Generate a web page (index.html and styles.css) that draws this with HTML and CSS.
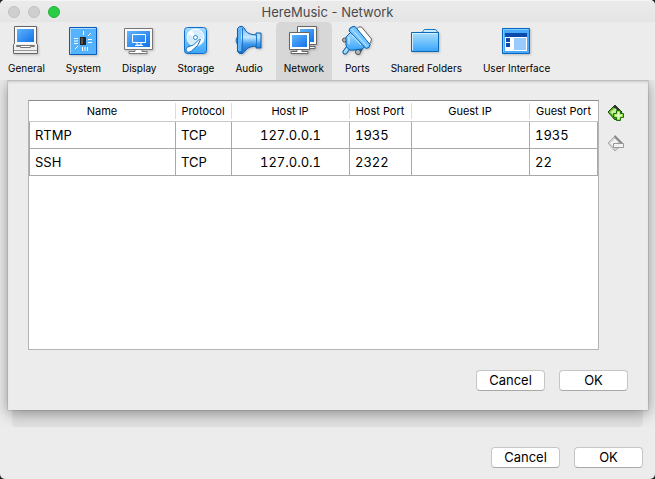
FILE: index.html
```html
<!DOCTYPE html>
<html lang="en">
<head>
  <meta charset="UTF-8" />
  <meta name="viewport" content="width=device-width, initial-scale=1.0" />
  <title>HereMusic - Network</title>
  <link rel="stylesheet" href="styles.css">
</head>
<body>

<div class="window">
  <svg class="defs" width="0" height="0" aria-hidden="true">
    <defs>
      <linearGradient id="screen" x1="0" y1="0" x2="1" y2="1">
        <stop offset="0" stop-color="#5fb4fb" />
        <stop offset="1" stop-color="#1272e8" />
      </linearGradient>
      <linearGradient id="sky" x1="0" y1="0" x2="0" y2="1">
        <stop offset="0" stop-color="#a9defe" />
        <stop offset="1" stop-color="#38a5fb" />
      </linearGradient>
      <linearGradient id="horn" x1="0" y1="0" x2="0" y2="1">
        <stop offset="0" stop-color="#5fb4f8" />
        <stop offset="0.4" stop-color="#c4e8ff" />
        <stop offset="0.65" stop-color="#3d98ea" />
        <stop offset="1" stop-color="#1767c4" />
      </linearGradient>
    </defs>
  </svg>

  <header class="titlebar">
    <div class="lights">
      <button class="light" aria-label="Close"></button>
      <button class="light" aria-label="Minimize"></button>
      <button class="light zoom" aria-label="Zoom"></button>
    </div>
    <h1>HereMusic - Network</h1>
  </header>

  <nav class="toolbar">
    <button class="tab">
      <svg viewBox="0 0 32 32">
        <path d="M4.500 1.500h22v18h-22z" fill="#fafafa" stroke="#666" />
        <path d="M7 4h17v13H7z" fill="url(#screen)" />
        <path d="M3.500 19.500h24v9h-24z" fill="#efefef" stroke="#666" />
        <path d="M4 25.500h23" stroke="#999" />
        <path d="M4 19.500h23" stroke="#efefef" />
        <path d="M6.500 20.500h18v1h-4v1h-10v-1h-4z" fill="#fff" stroke="#777" />
      </svg>
      <span>General</span>
    </button>
    <button class="tab">
      <svg viewBox="0 0 32 32">
        <path d="M2.500 2.500h27v27h-27z" fill="#55b2fc" stroke="#0a5cb8" />
        <path d="M3.500 28.500v-25h25" fill="none" stroke="#a9ddff" />
        <path d="M13 12h6v8h-6z" fill="#222" />
        <path d="M14 13h2v6h-2z" fill="#555" />
        <path d="M16.500 6v4M21 11l3-3M7 13.500h4M7 16h4M7 18.500h4M21 14.500h4M21 17.500h4M8 24l3-3M15.500 22v4M18 22v4M20.500 22v4" stroke="#fff" />
      </svg>
      <span>System</span>
    </button>
    <button class="tab">
      <svg viewBox="0 0 32 32">
        <path d="M1.500 3.500h28v21h-28z" fill="#f8f8f8" stroke="#777" />
        <path d="M4 6h23v16H4z" fill="url(#screen)" />
        <path d="M9.500 9.500h13v8h-13zM14 18v2h4v-2M12 20.500h8" fill="none" stroke="#fff" />
        <path d="M12 24.500h7v2h5v2H6v-2h6z" fill="#fff" stroke="#777" />
      </svg>
      <span>Display</span>
    </button>
    <button class="tab">
      <svg viewBox="0 0 32 32">
        <rect x="4.500" y="2.500" width="22" height="26" rx="3" fill="url(#sky)" stroke="#0d6fca" />
        <circle cx="15.500" cy="12.500" r="8.500" fill="#d3edfd" stroke="#fff" />
        <path d="M15.500 12.500L7 9a9 9 0 0 1 5-4zM15.500 12.500l8.500 2a9 9 0 0 1-3 5z" fill="#f8fdff" />
        <circle cx="15.500" cy="12.500" r="2" fill="#fff" stroke="#2a86d2" />
        <path d="M7.500 22l6-2 6-6 1 .5-3 6-6 5.500c-2 1.500-4 1.500-5 0s0-3 1-4z" fill="#fff" stroke="#1a6fbe" />
      </svg>
      <span>Storage</span>
    </button>
    <button class="tab">
      <svg viewBox="0 0 32 32">
        <path d="M5 11.500c-2.500 2-2.500 6 0 8" fill="#7cc6fb" stroke="#0d5da8" />
        <path d="M4.500 3.500l2-2h3c2 1 2 4 5 6 2 1.500 4 2 8.500 2.500v-2h5v15h-5v-2c-4.500.5-6.500 1-8.500 2.500-3 2-3 4-5 5h-3l-2-2z" fill="url(#horn)" stroke="#0d5da8" />
        <path d="M5 4h3v22H5z" fill="#62b5f8" />
        <path d="M9.500 3v24M23.500 10v11" stroke="#1c78ce" />
      </svg>
      <span>Audio</span>
    </button>
    <button class="tab active" aria-current="page">
      <svg viewBox="0 0 32 32">
        <path d="M9.500 1.500h19v18h-19zM21 21.500h6v2h-6z" fill="#f8f8f8" stroke="#666" />
        <path d="M12 4h14v13H12z" fill="url(#screen)" />
        <path d="M1.500 7.500h20v17h-20z" fill="#fff" stroke="#666" />
        <path d="M4 10h15v12H4z" fill="url(#screen)" />
        <path d="M9 24.500h5v2h6v2H3v-2h6z" fill="#fff" stroke="#666" />
      </svg>
      <span>Network</span>
    </button>
    <button class="tab">
      <svg viewBox="0 0 32 32">
        <path d="M15.500 4l2-2h3l10 12-1 4-3 1z" fill="#fff" stroke="#666" />
        <path d="M4 27l3-4M17 27l2-3" stroke="#0d5da8" stroke-width="5" stroke-linecap="round" />
        <path d="M4 27l3-4" stroke="#a3dcff" stroke-width="3" stroke-linecap="round" />
        <circle cx="3.500" cy="15" r="2" fill="#bbb" stroke="#555" />
        <circle cx="17" cy="27" r="2.500" fill="#bbb" stroke="#555" />
        <path d="M10 7l-5 5v8c1 4 4 6 8 5l8-1 5-4z" fill="url(#sky)" stroke="#0d5da8" />
        <path d="M9 3l3-1.500h2l15 18-1 3-3 1L8 6z" fill="#72c5fe" stroke="#0d5da8" />
        <path d="M10.500 4L26 21.500" stroke="#c5eaff" />
        <path d="M8 12v7M11 10l9 10" stroke="#d8f2ff" />
      </svg>
      <span>Ports</span>
    </button>
    <button class="tab">
      <svg viewBox="0 0 32 32">
        <path d="M11.500 8l3-3.500h11l3 3.500v3h-17z" fill="#c9ecff" stroke="#137bc8" />
        <path d="M1.500 7.500h27v19h-27z" fill="url(#sky)" stroke="#0d69b5" />
        <path d="M2.500 25.500v-17h25" fill="none" stroke="#d4f0ff" />
      </svg>
      <span>Shared Folders</span>
    </button>
    <button class="tab">
      <svg viewBox="0 0 32 32">
        <path d="M1.500 3.500h27v25h-27z" fill="#4aa9f8" stroke="#0867c6" />
        <path d="M2.500 27v-22.500h25" fill="none" stroke="#7fcbff" />
        <path d="M4 8h22v18H4z" fill="#fff" />
        <path d="M4 8h22v4H4zM5 13h4v4H5zM5 18h4v4H5z" fill="#0a4bad" />
        <path d="M13 13h12v12H13z" fill="#9acbfe" />
      </svg>
      <span>User Interface</span>
    </button>
  </nav>

  <main class="content">
    <section class="sheet">
      <div class="rules">
        <div class="list">
          <table>
            <colgroup>
              <col class="col-name">
              <col class="col-protocol">
              <col class="col-ip">
              <col class="col-port">
              <col class="col-ip">
              <col class="col-guest-port">
            </colgroup>
            <thead>
              <tr>
                <th><span>Name</span></th>
                <th><span>Protocol</span></th>
                <th><span>Host IP</span></th>
                <th><span>Host Port</span></th>
                <th><span>Guest IP</span></th>
                <th><span>Guest Port</span></th>
              </tr>
            </thead>
            <tbody>
              <tr>
                <td>RTMP</td>
                <td>TCP</td>
                <td class="ip">127.0.0.1</td>
                <td>1935</td>
                <td class="ip"></td>
                <td>1935</td>
              </tr>
              <tr>
                <td>SSH</td>
                <td>TCP</td>
                <td class="ip">127.0.0.1</td>
                <td>2322</td>
                <td class="ip"></td>
                <td>22</td>
              </tr>
            </tbody>
          </table>
        </div>
        <div class="tools">
          <button class="tool" aria-label="Add rule">
            <svg viewBox="0 0 18 18">
              <path d="M1 8l7-7 7 7-7 8z" fill="#58b520" stroke="#1d4f0c" />
              <path d="M8 1l6 6-2 1-6-5z" fill="#333" />
              <path d="M3 8l5-4 3 3-5 4z" fill="#c4ee9d" />
              <path d="M9.500 6.500h4v3h3v4h-3v3h-4v-3h-3v-4h3z" fill="#8fe03f" stroke="#1f6b0c" />
              <path d="M11.500 8v7M8 11.500h7" stroke="#e2fbc4" stroke-width="2" />
            </svg>
          </button>
          <button class="tool" aria-label="Remove rule" disabled>
            <svg viewBox="0 0 18 18">
              <path d="M1 9l7-7 8 8-8 7z" fill="#d2d2d2" stroke="#aaa" />
              <path d="M8 1l8 8-2 1-7-7z" fill="#888" />
              <path d="M3 9l5-4 3 3-5 4z" fill="#f4f4f4" />
              <path d="M6.500 9.500h10v4h-10z" fill="#f2f2f2" stroke="#999" />
            </svg>
          </button>
        </div>
      </div>
      <div class="actions">
        <button class="btn">Cancel</button>
        <button class="btn">OK</button>
      </div>
    </section>
    <div class="panel"></div>
  </main>

  <footer class="actions">
    <button class="btn">Cancel</button>
    <button class="btn">OK</button>
  </footer>
</div>

</body>
</html>
```
FILE: styles.css
```css
* {
  margin: 0;
  padding: 0;
  box-sizing: border-box;
}

body {
  background-color: #222;
  font-family: Inter, "Liberation Sans", sans-serif;
  color: #000;
}

button {
  border: none;
  background: none;
  font-family: inherit;
  color: inherit;
}

.defs {
  position: absolute;
}

.window {
  display: flex;
  flex-direction: column;
  min-height: 100vh;
  background-color: #ececec;
  border-radius: 5px;
  overflow: hidden;
}

.titlebar {
  display: grid;
  grid-template-columns: 1fr auto 1fr;
  align-items: center;
  height: 22px;
  padding: 0 8px;
  background: linear-gradient(#ebebeb, #e5e5e5);
  border-top: 1px solid #f5f5f5;
}

.titlebar h1 {
  font-size: 13px;
  font-weight: 400;
  line-height: 16px;
  color: #4a4a4a;
}

.lights {
  display: flex;
  gap: 8px;
}

.light {
  width: 12px;
  height: 12px;
  border: 1px solid #c2c2c2;
  border-radius: 50%;
  background-color: #cfcfcf;
}

.light.zoom {
  border-color: #1fb53a;
  background-color: #28cc45;
}

.toolbar {
  display: flex;
  gap: 5px;
}

.tab {
  display: flex;
  flex-direction: column;
  align-items: center;
  height: 58px;
  padding: 3px 8px 0;
  font-size: 10px;
  line-height: 14px;
  white-space: nowrap;
}

.tab svg {
  width: 32px;
  height: 32px;
  margin: 0 -8px 4px;
  filter: drop-shadow(1px 1px 1px rgba(0, 0, 0, 0.2));
}

.tab.active {
  background-color: #d7d7d7;
  border-radius: 5px 5px 0 0;
}

.content {
  flex: 1;
  display: flex;
  flex-direction: column;
  overflow: hidden;
}

.sheet {
  position: relative;
  z-index: 1;
  flex: 1;
  display: flex;
  flex-direction: column;
  margin: 0 7px 0 8px;
  padding: 20px 20px 19px;
  background-color: #ececec;
  box-shadow: 0 0 1px rgba(0, 0, 0, 0.5), 0 3px 14px rgba(0, 0, 0, 0.4), inset 0 3px 3px -2px rgba(0, 0, 0, 0.3);
}

.panel {
  height: 17px;
  margin: 0 12px;
  background-color: #e1e1e1;
  border-radius: 0 0 4px 4px;
}

.rules {
  flex: 1;
  display: flex;
  gap: 8px;
  margin-right: 3px;
}

.list {
  flex: 1;
  background-color: #fff;
  border: 1px solid #b4b4b4;
  border-top-color: #8c8c8c;
}

table {
  width: 100%;
  table-layout: fixed;
  border-collapse: collapse;
}

.col-protocol {
  width: 56px;
}

.col-ip {
  width: 118px;
}

.col-port {
  width: 62px;
}

.col-guest-port {
  width: 68px;
}

th {
  height: 20px;
  padding: 2px 0;
  font-size: 11px;
  font-weight: 400;
  white-space: nowrap;
  border-bottom: 1px solid #c8c8c8;
}

th span {
  display: block;
  line-height: 16px;
  border-right: 1px solid #dcdcdc;
}

th:last-child span {
  border-right: none;
}

td {
  height: 27px;
  padding: 0 5px;
  font-size: 13px;
  font-variant-numeric: tabular-nums;
  border: 1px solid #a8a8a8;
}

td.ip {
  text-align: center;
}

.tools {
  display: flex;
  flex-direction: column;
  gap: 12px;
  padding-top: 4px;
}

.tool,
.tool svg {
  display: block;
  width: 18px;
  height: 18px;
}

.actions {
  display: flex;
  justify-content: flex-end;
  gap: 14px;
}

.sheet .actions {
  margin-top: 20px;
}

footer.actions {
  padding: 20px 12px 11px;
}

.btn {
  width: 69px;
  height: 21px;
  font-size: 13px;
  line-height: 19px;
  background-color: #fff;
  border: 1px solid #c6c6c6;
  border-bottom-color: #a8a8a8;
  border-radius: 4px;
}
```
